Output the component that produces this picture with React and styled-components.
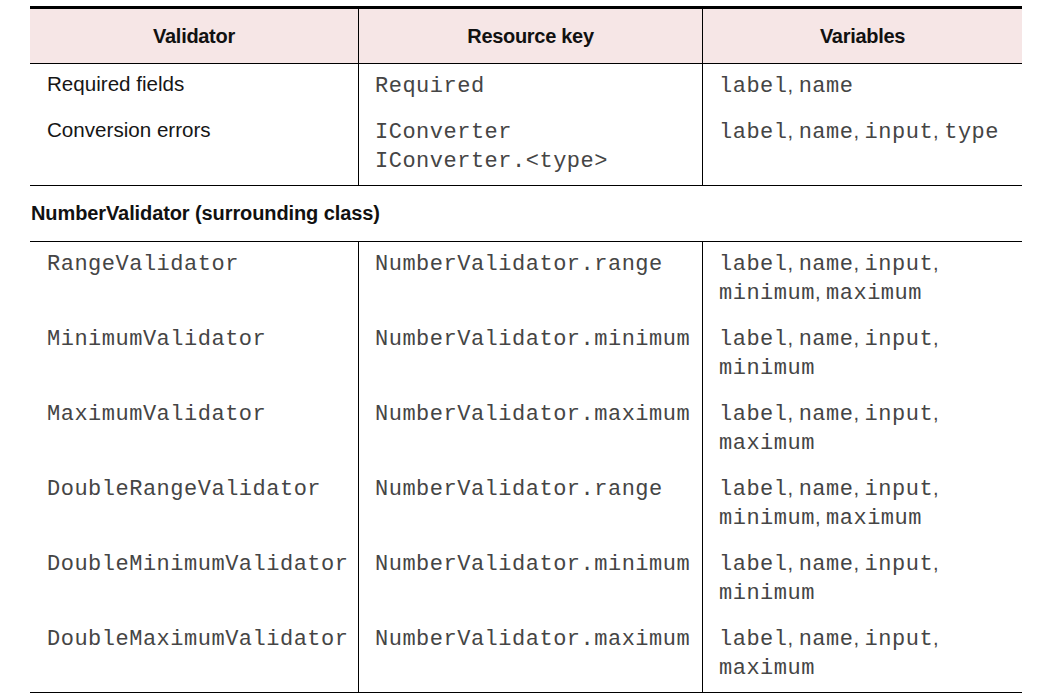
import React from "react";
import styled, { createGlobalStyle } from "styled-components";

const Global = createGlobalStyle`
  body {
    margin: 0;
    background: #fff;
    font-family: "Liberation Sans", Arial, sans-serif;
    color: #111;
  }
`;

const Page = styled.div`
  padding: 6px 31px 0 30px;
  width: 992px;
`;

const Head = styled.div`
  display: grid;
  grid-template-columns: 328px 344px 320px;
  border-top: 3px solid #000;
  border-bottom: 1px solid #000;
  background: #f6e6e6;
`;

const HeadCell = styled.div`
  height: 54px;
  display: flex;
  align-items: center;
  justify-content: center;
  font-weight: bold;
  font-size: 20px;
  letter-spacing: -0.3px;
  border-left: ${(p) => (p.$first ? "none" : "1px solid #000")};
`;

const Body = styled.div`
  border-bottom: 1px solid #000;
`;

const Row = styled.div`
  display: grid;
  grid-template-columns: 328px 344px 320px;
`;

const Cell = styled.div`
  padding: 7px 0 10px ${(p) => (p.$first ? 17 : 16)}px;
  border-left: ${(p) => (p.$first ? "none" : "1px solid #000")};
  font-family: ${(p) =>
    p.$mono
      ? '"Liberation Mono", "Courier New", monospace'
      : '"Liberation Sans", Arial, sans-serif'};
  font-size: ${(p) => (p.$mono ? "22px" : "20.6px")};
  letter-spacing: ${(p) => (p.$mono ? "0.5px" : "0")};
  color: ${(p) => (p.$mono ? "#454545" : "#161616")};
  white-space: pre;
`;

const Line = styled.div`
  height: 29px;
  line-height: 29px;
  position: relative;
  top: ${(p) => (p.$sans ? "-2px" : "1px")};
`;

const Sep = styled.span`
  font-family: "Liberation Sans", Arial, sans-serif;
  font-size: 20px;
  letter-spacing: 0;
  line-height: 1;
`;

const Heading = styled.div`
  height: 55px;
  display: flex;
  align-items: center;
  padding-left: 1px;
  font-weight: bold;
  font-size: 20px;
  letter-spacing: -0.1px;
  border-bottom: 1px solid #000;
`;

function Vars({ lines }) {
  return lines.map((line, i) => (
    <Line key={i}>
      {line.map((w, j) => (
        <React.Fragment key={j}>
          {w}
          {(j < line.length - 1 || i < lines.length - 1) && <Sep>, </Sep>}
        </React.Fragment>
      ))}
    </Line>
  ));
}

const first = [
  { name: "Required fields", keys: ["Required"], vars: [["label", "name"]] },
  {
    name: "Conversion errors",
    keys: ["IConverter", "IConverter.<type>"],
    vars: [["label", "name", "input", "type"]],
  },
];

const number = [
  ["RangeValidator", "NumberValidator.range", [["label", "name", "input"], ["minimum", "maximum"]]],
  ["MinimumValidator", "NumberValidator.minimum", [["label", "name", "input"], ["minimum"]]],
  ["MaximumValidator", "NumberValidator.maximum", [["label", "name", "input"], ["maximum"]]],
  ["DoubleRangeValidator", "NumberValidator.range", [["label", "name", "input"], ["minimum", "maximum"]]],
  ["DoubleMinimumValidator", "NumberValidator.minimum", [["label", "name", "input"], ["minimum"]]],
  ["DoubleMaximumValidator", "NumberValidator.maximum", [["label", "name", "input"], ["maximum"]]],
];

export default function App() {
  return (
    <Page>
      <Global />
      <Head>
        <HeadCell $first>Validator</HeadCell>
        <HeadCell>Resource key</HeadCell>
        <HeadCell>Variables</HeadCell>
      </Head>
      <Body>
        {first.map((r) => (
          <Row key={r.name}>
            <Cell $first>
              <Line $sans>{r.name}</Line>
            </Cell>
            <Cell $mono>
              {r.keys.map((k) => (
                <Line key={k}>{k}</Line>
              ))}
            </Cell>
            <Cell $mono>
              <Vars lines={r.vars} />
            </Cell>
          </Row>
        ))}
      </Body>
      <Heading>NumberValidator (surrounding class)</Heading>
      <Body>
        {number.map(([name, key, vars]) => (
          <Row key={name}>
            <Cell $first $mono>
              <Line>{name}</Line>
            </Cell>
            <Cell $mono>
              <Line>{key}</Line>
            </Cell>
            <Cell $mono>
              <Vars lines={vars} />
            </Cell>
          </Row>
        ))}
      </Body>
    </Page>
  );
}
